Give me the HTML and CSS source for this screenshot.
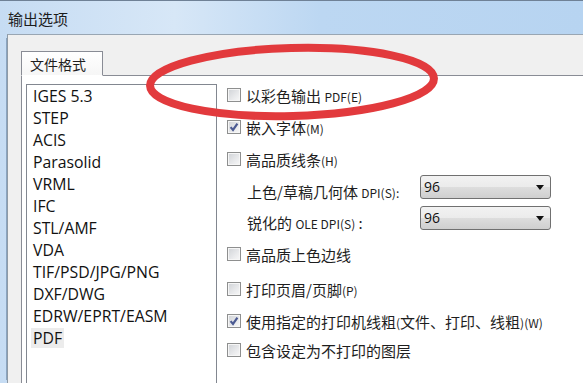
FILE: index.html
```html
<!DOCTYPE html>
<html lang="zh-CN">
<head>
  <meta charset="UTF-8" />
  <title>输出选项</title>
  <link rel="stylesheet" href="styles.css">
</head>
<body>
  <div class="window">
    <div class="titlebar">输出选项</div>

    <div class="client">
      <div class="tabs">
        <div class="tab">文件格式</div>
      </div>

      <div class="page">
        <ul class="formats">
          <li>IGES 5.3</li>
          <li>STEP</li>
          <li>ACIS</li>
          <li>Parasolid</li>
          <li>VRML</li>
          <li>IFC</li>
          <li>STL/AMF</li>
          <li>VDA</li>
          <li>TIF/PSD/JPG/PNG</li>
          <li>DXF/DWG</li>
          <li>EDRW/EPRT/EASM</li>
          <li><span class="current">PDF</span></li>
        </ul>

        <div class="options">
          <label class="opt">
            <span class="box"></span>
            <span>以彩色输出 <small>PDF(E)</small></span>
          </label>
          <label class="opt">
            <span class="box checked">
              <svg viewBox="0 0 12 12" width="12" height="12"><path d="M2.6 6.1 L5 8.9 L9.4 2.7" /></svg>
            </span>
            <span>嵌入字体<small>(M)</small></span>
          </label>
          <label class="opt">
            <span class="box"></span>
            <span>高品质线条<small>(H)</small></span>
          </label>

          <div class="dpi first">
            <span class="dpi-label">上色/草稿几何体 <small>DPI(S):</small></span>
            <div class="select">96<span class="arrow"></span></div>
          </div>
          <div class="dpi">
            <span class="dpi-label">锐化的 <small>OLE DPI(S)</small> :</span>
            <div class="select">96<span class="arrow"></span></div>
          </div>

          <label class="opt after-dpi">
            <span class="box"></span>
            <span>高品质上色边线</span>
          </label>
          <label class="opt wide">
            <span class="box"></span>
            <span>打印页眉/页脚<small>(P)</small></span>
          </label>
          <label class="opt">
            <span class="box checked">
              <svg viewBox="0 0 12 12" width="12" height="12"><path d="M2.6 6.1 L5 8.9 L9.4 2.7" /></svg>
            </span>
            <span>使用指定的打印机线粗<small>(</small>文件、打印、线粗<small>)(W)</small></span>
          </label>
          <label class="opt tight">
            <span class="box"></span>
            <span>包含设定为不打印的图层</span>
          </label>
        </div>
      </div>
    </div>

    <!-- red hand-drawn marker circling the colour option -->
    <svg class="marker" width="583" height="383" viewBox="0 0 583 383">
      <ellipse cx="292" cy="81" rx="142" ry="34" transform="rotate(-1.5 292 81)" />
    </svg>
  </div>
</body>
</html>
```

FILE: styles.css
```css
body {
  margin: 0;
  width: 583px;
  height: 383px;
  overflow: hidden;
  font-family: 'Noto Sans CJK SC', sans-serif;
  color: #1e1e1e;
  background: #c3dbf3;
}

.window {
  position: relative;
  height: 383px;
  border-top: 1px solid #6f8196;
  box-sizing: border-box;
  background: linear-gradient(90deg, #c6dcf3 0%, #d7e7f7 30%, #bcd7f2 55%, #b7d4f1 100%);
}

.titlebar {
  height: 33px;
  padding-left: 8px;
  font-size: 15px;
  line-height: 35px;
  color: #1c1c1c;
}

.client {
  margin-left: 7px;
  height: 349px;
  border-left: 1px solid #8e9aa6;
  border-top: 1px solid #99a6b3;
  background: #f0f0f0;
  box-shadow: -5px 0 0 -4px #8aa4c0;
}

.tabs {
  display: flex;
  padding: 16px 0 0 13px;
}

.tab {
  width: 72px;
  height: 23px;
  border: 1px solid #898c95;
  border-bottom: 1px solid #ffffff;
  background: linear-gradient(#ffffff, #f6f6f6);
  font-size: 14px;
  line-height: 24px;
  padding-left: 8px;
  position: relative;
  z-index: 1;
  margin-bottom: -1px;
}

.page {
  display: flex;
  margin-left: 13px;
  height: 320px;
  border-left: 1px solid #898c95;
  border-top: 1px solid #898c95;
  background: #ffffff;
}

.formats {
  list-style: none;
  margin: 8px 0 0 4px;
  padding: 0;
  width: 189px;
  border: 1px solid #828790;
  border-bottom: none;
  font-family: 'Open Sans', sans-serif;
  font-size: 15.8px;
  color: #111;
}

.formats li {
  height: 22px;
  line-height: 22px;
  padding-left: 6px;
}

.formats .current {
  display: inline-block;
  margin-left: -2px;
  padding: 0 2px;
  line-height: 20px;
  background: #ececec;
}

.options {
  display: flex;
  flex-direction: column;
  padding: 9px 0 0 10px;
}

.opt {
  display: flex;
  align-items: center;
  gap: 5px;
  height: 20px;
  margin-top: 12px;
  font-size: 15px;
  white-space: nowrap;
}

.opt:first-child {
  margin-top: 0;
}

.opt.after-dpi {
  margin-top: 14px;
}

.opt.wide {
  margin-top: 15px;
}

.opt.tight {
  margin-top: 9px;
}

small {
  font-size: 12px;
}

.box {
  width: 12px;
  height: 12px;
  border: 1px solid #8e8f8f;
  background: linear-gradient(135deg, #cfd2d6, #e9eaec 60%, #f8f8f8);
  box-shadow: inset 0 0 0 1px #f6f6f6;
  display: flex;
  align-items: center;
  justify-content: center;
  flex: none;
}

.box svg path {
  fill: none;
  stroke: #4b5a92;
  stroke-width: 2.2;
}

.dpi {
  display: flex;
  align-items: center;
  height: 24px;
  margin-top: 7px;
  padding-left: 20px;
  font-size: 15px;
  white-space: nowrap;
}

.dpi.first {
  margin-top: 6px;
}

.dpi-label {
  width: 173px;
  padding-top: 8px;
}

.select {
  position: relative;
  width: 126px;
  height: 22px;
  border: 1px solid #707070;
  border-radius: 3px;
  background: linear-gradient(#f2f2f2, #ebebeb 50%, #dddddd 51%, #cfcfcf);
  font-family: 'Open Sans', sans-serif;
  font-size: 14px;
  line-height: 22px;
  padding-left: 3px;
  color: #111;
}

.arrow {
  position: absolute;
  right: 6px;
  top: 9px;
  border-left: 4px solid transparent;
  border-right: 4px solid transparent;
  border-top: 5px solid #111;
}

.marker {
  position: absolute;
  left: 0;
  top: 0;
  pointer-events: none;
}

.marker ellipse {
  fill: none;
  stroke: #e23a3d;
  stroke-width: 8;
}
```
